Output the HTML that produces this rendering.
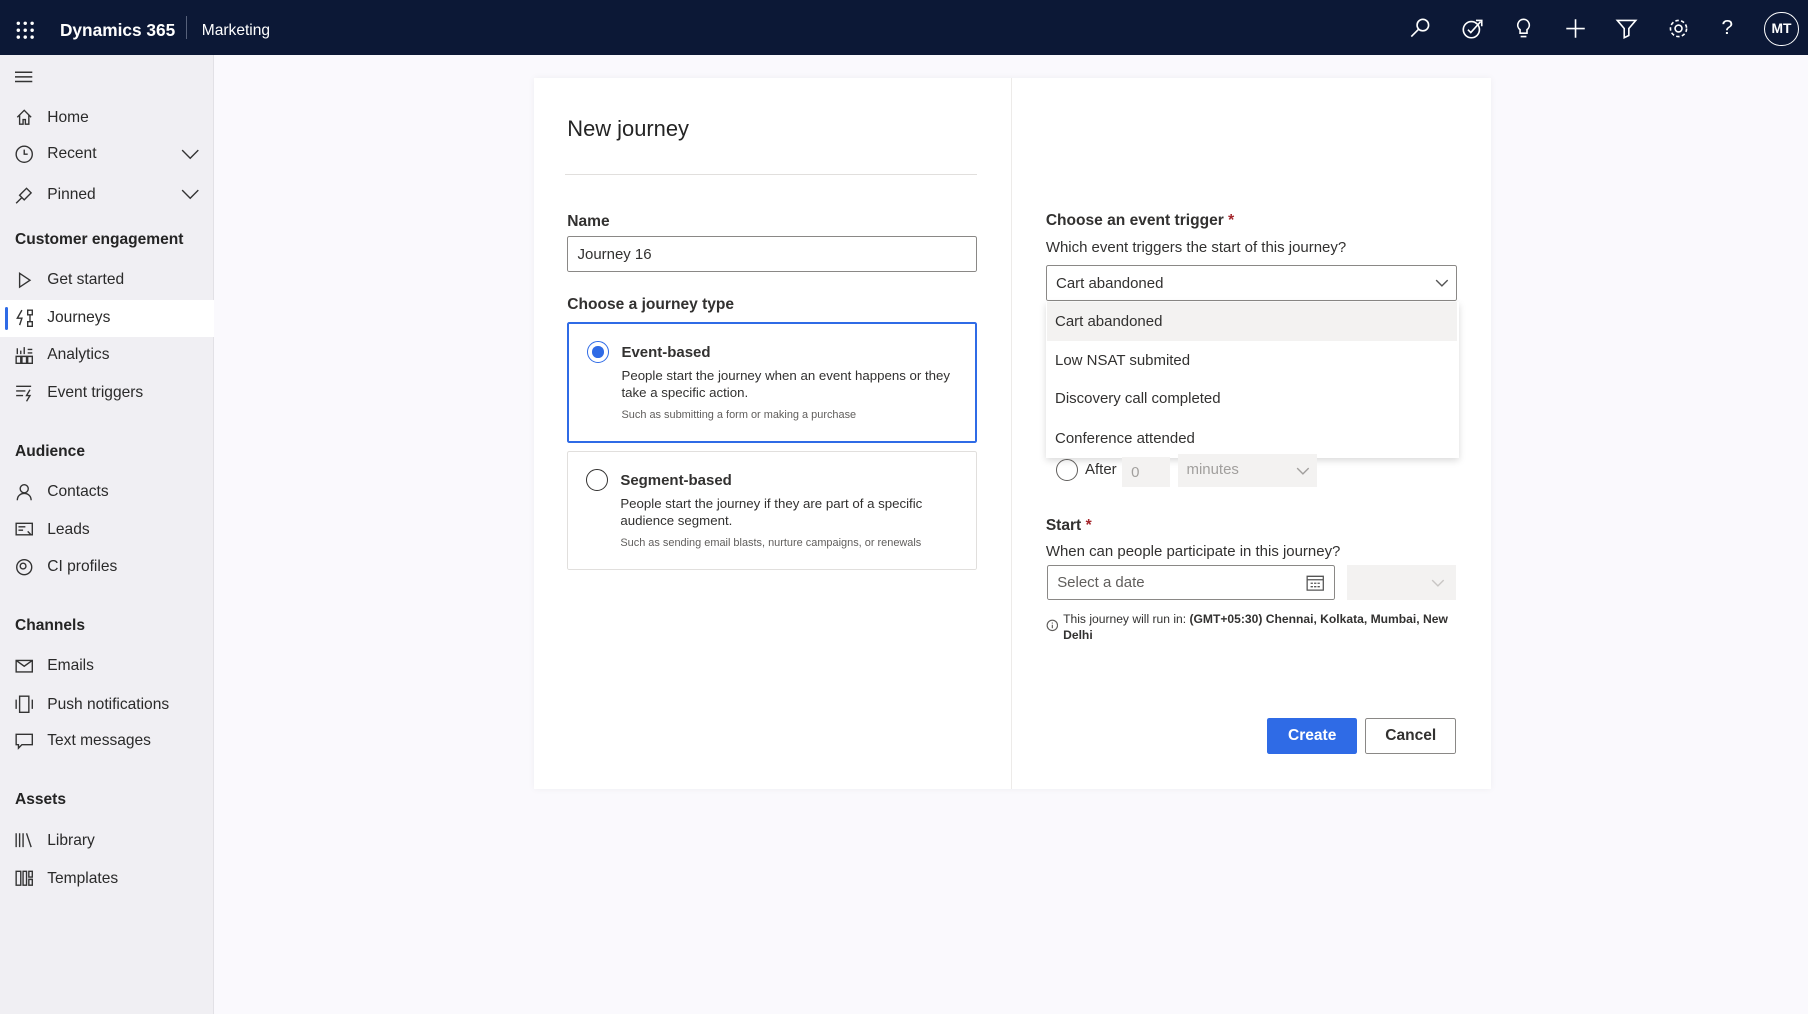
<!DOCTYPE html>
<html><head><meta charset="utf-8"><style>
*{box-sizing:border-box;margin:0;padding:0}
html,body{width:1808px;height:1014px;overflow:hidden}
body{font-family:"Liberation Sans",sans-serif;background:#faf9fd;color:#242424}
#w{zoom:1.15306;width:1568px;height:879px;position:relative}
.top{position:absolute;left:0;top:0;width:1568px;height:48px;background:#0c1836;color:#fff}
.side{position:absolute;left:0;top:48px;width:186px;height:831px;background:#f0eff3;border-right:1px solid #e2e1e6}
.abs{position:absolute}
.ni{position:absolute;left:0;width:186px;height:32px;font-size:13.5px;color:#2a2a2a;display:flex;align-items:center;padding-left:41px}
.ni svg{position:absolute;left:13px;top:8px}
.sh{position:absolute;left:13px;font-size:13.5px;font-weight:bold;color:#242424}
.card{position:absolute;left:463px;top:68px;width:830px;height:616px;background:#fff;box-shadow:0 0 6px rgba(0,0,0,.05)}
.lbl{position:absolute;font-size:13.5px;font-weight:bold;color:#323130}
.txt{position:absolute;font-size:13px;color:#323130}
.inp{position:absolute;border:1px solid #8a8886;border-radius:2px;background:#fff;font-size:13px;color:#323130;padding-left:8px;display:flex;align-items:center}
.opt{position:absolute;left:908px;width:356px;height:34px;font-size:13px;color:#323130;padding-left:7px;display:flex;align-items:center}
</style></head><body><div id="w">
<div class="top">
 <svg class="abs" style="left:14px;top:18px" width="16" height="16" fill="#fff"><circle cx="2" cy="2" r="1.5"/><circle cx="8" cy="2" r="1.5"/><circle cx="14" cy="2" r="1.5"/><circle cx="2" cy="8" r="1.5"/><circle cx="8" cy="8" r="1.5"/><circle cx="14" cy="8" r="1.5"/><circle cx="2" cy="14" r="1.5"/><circle cx="8" cy="14" r="1.5"/><circle cx="14" cy="14" r="1.5"/></svg>
 <div class="abs" style="left:52px;top:17px;font-size:15px;font-weight:bold">Dynamics 365</div>
 <div class="abs" style="left:161px;top:14px;width:1px;height:20px;background:#56607a"></div>
 <div class="abs" style="left:175px;top:19px;font-size:13.5px">Marketing</div>
 <svg class="abs" style="left:1222px;top:15px" width="20" height="20" fill="none" stroke="#fff" stroke-width="1.4"><circle cx="12" cy="7" r="5"/><path d="M8.5 10.5L2 17"/></svg>
 <svg class="abs" style="left:1267px;top:15px" width="20" height="20" fill="none" stroke="#fff" stroke-width="1.4"><circle cx="9" cy="11" r="7"/><path d="M6 11l2.5 2.5L17 4M13 3h5v5"/></svg>
 <svg class="abs" style="left:1311px;top:15px" width="20" height="20" fill="none" stroke="#fff" stroke-width="1.4"><path d="M10 2a5 5 0 0 0-3 9v3h6v-3a5 5 0 0 0-3-9zM7.5 17h5"/></svg>
 <svg class="abs" style="left:1356px;top:15px" width="20" height="20" stroke="#fff" stroke-width="1.4"><path d="M10 2v16M2 10h16"/></svg>
 <svg class="abs" style="left:1401px;top:15px" width="20" height="20" fill="none" stroke="#fff" stroke-width="1.4"><path d="M2 3h16l-6 7v6l-4 2v-8z"/></svg>
 <svg class="abs" style="left:1446px;top:15px" width="20" height="20" fill="none" stroke="#fff" stroke-width="1.4"><circle cx="10" cy="10" r="3"/><circle cx="10" cy="10" r="7" stroke-dasharray="3 2"/></svg>
 <div class="abs" style="left:1493px;top:14px;font-size:18px">?</div>
 <div class="abs" style="left:1530px;top:10px;width:30px;height:30px;border:1.5px solid #fff;border-radius:50%;font-size:12px;font-weight:bold;text-align:center;line-height:27px">MT</div>
</div>
<div class="side">
 <svg class="abs" style="left:13px;top:13px" width="16" height="12" stroke="#333" stroke-width="1.3"><path d="M0 2h15M0 6h15M0 10h15"/></svg>
 <div class="ni" style="top:38px"><svg width="16" height="16" fill="none" stroke="#333" stroke-width="1.2"><path d="M2 8L8 2l6 6M4 6v8h3v-4h2v4h3V6"/></svg>Home</div>
 <div class="ni" style="top:70px"><svg width="16" height="16" fill="none" stroke="#333" stroke-width="1.2"><circle cx="8" cy="8" r="7"/><path d="M8 4v4h3"/></svg>Recent<svg style="left:157px;top:11px" width="16" height="10" fill="none" stroke="#333" stroke-width="1.2"><path d="M1 1l7 7 7-7"/></svg></div>
 <div class="ni" style="top:105px"><svg width="16" height="16" fill="none" stroke="#333" stroke-width="1.2"><path d="M1 15l5-5M4 8l4 4 2-2 4-4-4-4-4 4z"/></svg>Pinned<svg style="left:157px;top:11px" width="16" height="10" fill="none" stroke="#333" stroke-width="1.2"><path d="M1 1l7 7 7-7"/></svg></div>
 <div class="sh" style="top:152px">Customer engagement</div>
 <div class="ni" style="top:179px"><svg width="16" height="16" fill="none" stroke="#333" stroke-width="1.2"><path d="M4 2l9 6-9 6z"/></svg>Get started</div>
 <div class="ni" style="top:212px;background:#fff"><div class="abs" style="left:4px;top:6px;width:3px;height:20px;background:#2f6be6;border-radius:2px"></div><svg width="16" height="16" fill="none" stroke="#333" stroke-width="1.2"><path d="M6 1L2 8h4l-2 6M11 1h4v4h-4zM11 11h4v4h-4zM13 5v6"/></svg>Journeys</div>
 <div class="ni" style="top:244px"><svg width="16" height="16" fill="none" stroke="#333" stroke-width="1.2"><path d="M1 9h4v6H1zM6 9h4v6H6zM11 9h4v6h-4zM2 7V2M5 7V4M8 7V1M11 3h4M11 6h4"/></svg>Analytics</div>
 <div class="ni" style="top:277px"><svg width="16" height="16" fill="none" stroke="#333" stroke-width="1.2"><path d="M1 2h13M1 6h8M1 10h6M13 5l-3 5h3l-3 5"/></svg>Event triggers</div>
 <div class="sh" style="top:336px">Audience</div>
 <div class="ni" style="top:363px"><svg width="16" height="16" fill="none" stroke="#333" stroke-width="1.2"><circle cx="8" cy="5" r="3.5"/><path d="M2 15c0-4 3-6 6-6s6 2 6 6"/></svg>Contacts</div>
 <div class="ni" style="top:396px"><svg width="16" height="16" fill="none" stroke="#333" stroke-width="1.2"><path d="M1 2h14v10H1zM3 5h6M3 8h4M11 9l3 3"/></svg>Leads</div>
 <div class="ni" style="top:428px"><svg width="16" height="16" fill="none" stroke="#333" stroke-width="1.2"><circle cx="8" cy="8" r="6.5"/><circle cx="7" cy="7" r="2.5"/></svg>CI profiles</div>
 <div class="sh" style="top:487px">Channels</div>
 <div class="ni" style="top:514px"><svg width="16" height="16" fill="none" stroke="#333" stroke-width="1.2"><path d="M1 3h14v10H1zM1 3l7 5 7-5"/></svg>Emails</div>
 <div class="ni" style="top:547px"><svg width="16" height="16" fill="none" stroke="#333" stroke-width="1.2"><path d="M4 1h8v14H4zM1 4v8M15 4v8"/></svg>Push notifications</div>
 <div class="ni" style="top:579px"><svg width="16" height="16" fill="none" stroke="#333" stroke-width="1.2"><path d="M1 2h14v9H6l-3 3v-3H1z"/></svg>Text messages</div>
 <div class="sh" style="top:638px">Assets</div>
 <div class="ni" style="top:665px"><svg width="16" height="16" fill="none" stroke="#333" stroke-width="1.2"><path d="M1 2v12M4 2v12M7 2v12M10 2l4 12"/></svg>Library</div>
 <div class="ni" style="top:698px"><svg width="16" height="16" fill="none" stroke="#333" stroke-width="1.2"><path d="M1 2h4v12H1zM7 2h3v12H7zM12 2h3v5h-3zM12 9h3v5h-3z"/></svg>Templates</div>
</div>
<div class="card"></div>
<div class="abs" style="left:877px;top:68px;width:1px;height:616px;background:#edebe9"></div>
<div class="abs" style="left:492px;top:101px;font-size:19px;color:#242424">New journey</div>
<div class="abs" style="left:490px;top:151px;width:357px;height:1px;background:#e1dfdd"></div>
<div class="lbl" style="left:492px;top:185px">Name</div>
<div class="inp" style="left:492px;top:205px;width:355px;height:31px">Journey 16</div>
<div class="lbl" style="left:492px;top:257px">Choose a journey type</div>
<div class="abs" style="left:492px;top:279px;width:355px;height:105px;border:2px solid #2f6be6;border-radius:2px"></div>
<div class="abs" style="left:509px;top:296px;width:19px;height:19px;border:1.5px solid #2f6be6;border-radius:50%"></div>
<div class="abs" style="left:513.5px;top:300.5px;width:10px;height:10px;background:#2f6be6;border-radius:50%"></div>
<div class="lbl" style="left:539px;top:298px;font-size:13px">Event-based</div>
<div class="txt" style="left:539px;top:318px;font-size:11.5px;line-height:15px;width:295px">People start the journey when an event happens or they take a specific action.</div>
<div class="txt" style="left:539px;top:355px;font-size:9.5px;color:#605e5c">Such as submitting a form or making a purchase</div>
<div class="abs" style="left:492px;top:391px;width:355px;height:103px;border:1px solid #e1dfdd;border-radius:2px"></div>
<div class="abs" style="left:508px;top:407px;width:19px;height:19px;border:1.5px solid #323130;border-radius:50%"></div>
<div class="lbl" style="left:538px;top:409px;font-size:13px">Segment-based</div>
<div class="txt" style="left:538px;top:429px;font-size:11.5px;line-height:15px;width:295px">People start the journey if they are part of a specific audience segment.</div>
<div class="txt" style="left:538px;top:466px;font-size:9.5px;color:#605e5c">Such as sending email blasts, nurture campaigns, or renewals</div>

<div class="lbl" style="left:907px;top:184px">Choose an event trigger <span style="color:#a4262c">*</span></div>
<div class="txt" style="left:907px;top:207px">Which event triggers the start of this journey?</div>
<div class="inp" style="left:907px;top:230px;width:357px;height:31px">Cart abandoned<svg class="abs" style="left:337px;top:11px" width="12" height="8" fill="none" stroke="#555" stroke-width="1.2"><path d="M1 1l5 5 5-5"/></svg></div>
<div class="abs" style="left:907px;top:262px;width:358px;height:135px;background:#fff;box-shadow:0 2px 6px rgba(0,0,0,.15)"></div>
<div class="opt" style="top:262px;background:#f3f2f1">Cart abandoned</div>
<div class="opt" style="top:296px">Low NSAT submited</div>
<div class="opt" style="top:329px">Discovery call completed</div>
<div class="opt" style="top:363px">Conference attended</div>
<div class="abs" style="left:916px;top:398px;width:19px;height:19px;border:1.5px solid #605e5c;border-radius:50%"></div>
<div class="txt" style="left:941px;top:400px">After</div>
<div class="abs" style="left:973px;top:396px;width:42px;height:26px;background:#f3f2f1;font-size:13px;color:#a19f9d;padding:6px 8px">0</div>
<div class="abs" style="left:1022px;top:394px;width:120px;height:28px;background:#f3f2f1;font-size:13px;color:#a19f9d;padding:6px 7px">minutes<svg class="abs" style="left:102px;top:11px" width="12" height="8" fill="none" stroke="#a19f9d" stroke-width="1.2"><path d="M1 1l5 5 5-5"/></svg></div>
<div class="lbl" style="left:907px;top:448px">Start <span style="color:#a4262c">*</span></div>
<div class="txt" style="left:907px;top:471px">When can people participate in this journey?</div>
<div class="inp" style="left:908px;top:490px;width:250px;height:30px;color:#605e5c">Select a date<svg class="abs" style="left:224px;top:7px" width="16" height="15" fill="none" stroke="#555" stroke-width="1.1"><path d="M1 2h14v12H1zM1 5h14M4 8h2M7 8h2M10 8h2M4 11h2M7 11h2M10 11h2"/></svg></div>
<div class="abs" style="left:1168px;top:490px;width:95px;height:30px;background:#f3f2f1"><svg class="abs" style="left:73px;top:12px" width="12" height="8" fill="none" stroke="#c8c6c4" stroke-width="1.2"><path d="M1 1l5 5 5-5"/></svg></div>
<svg class="abs" style="left:907px;top:537px" width="11" height="11" fill="none" stroke="#605e5c"><circle cx="5.5" cy="5.5" r="4.5"/><path d="M5.5 5v3M5.5 3v1"/></svg>
<div class="txt" style="left:922px;top:530px;font-size:10.5px;line-height:14px;width:340px">This journey will run in: <b>(GMT+05:30) Chennai, Kolkata, Mumbai, New Delhi</b></div>
<div class="abs" style="left:1099px;top:623px;width:78px;height:31px;background:#2f6be6;color:#fff;font-size:13.5px;font-weight:bold;text-align:center;line-height:31px;border-radius:2px">Create</div>
<div class="abs" style="left:1184px;top:623px;width:79px;height:31px;border:1px solid #8a8886;color:#323130;font-size:13.5px;font-weight:bold;text-align:center;line-height:29px;border-radius:2px">Cancel</div>
</div></body></html>
